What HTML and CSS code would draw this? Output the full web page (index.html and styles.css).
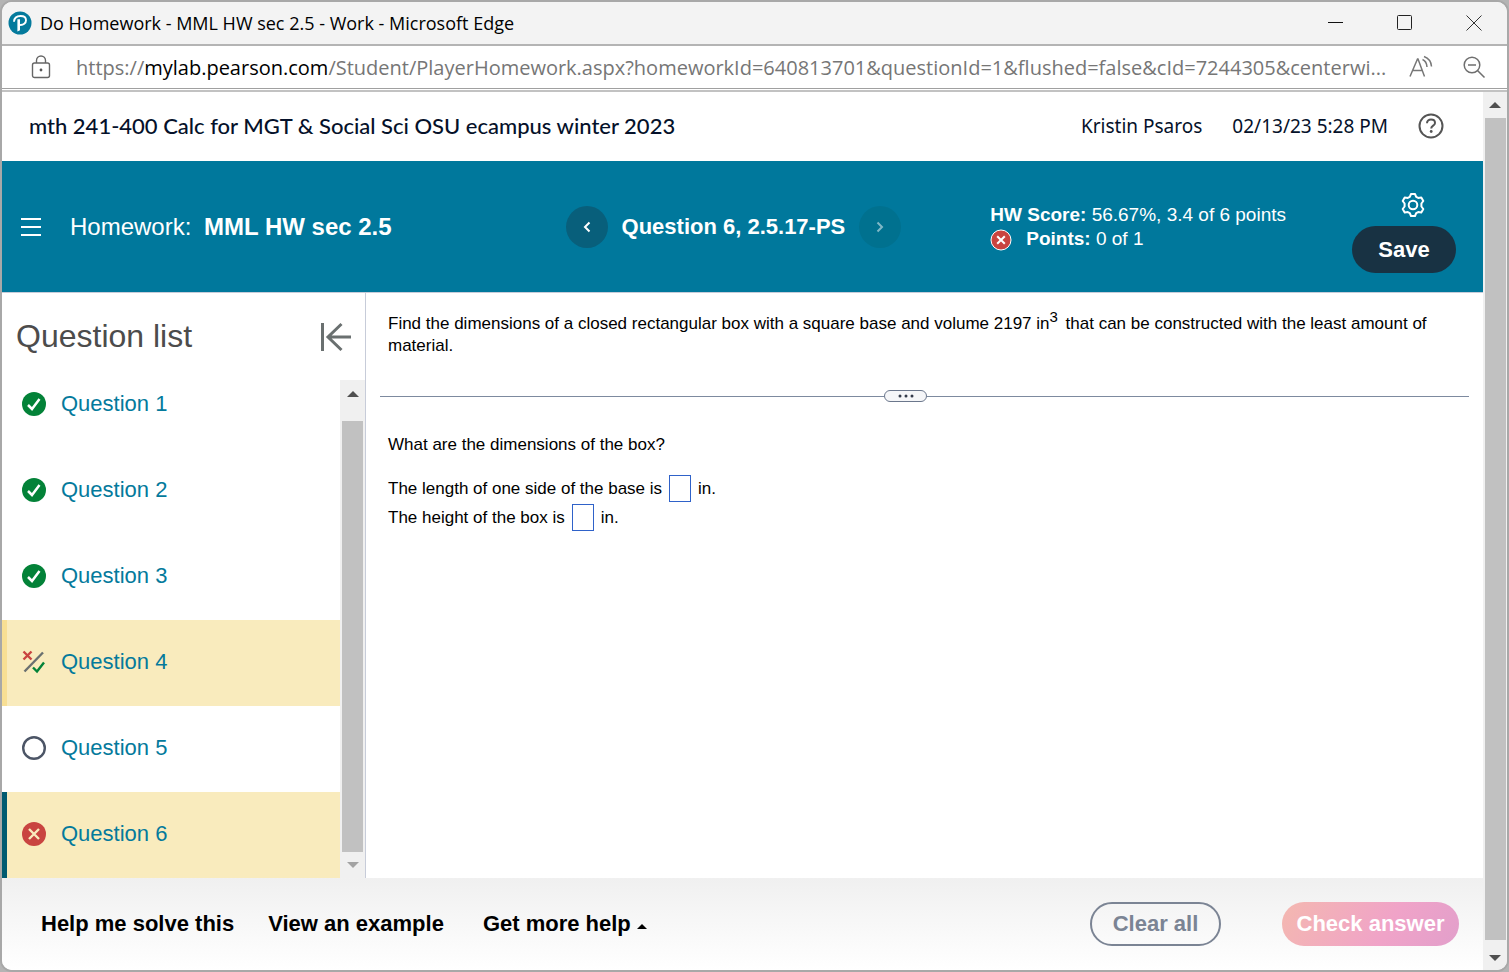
FILE: index.html
```html
<!DOCTYPE html>
<html lang="en">

<head>
    <meta charset="UTF-8">
    <meta name="viewport" content="width=device-width, initial-scale=1.0">
    <title>Do Homework - MML HW sec 2.5</title>
    <link rel="stylesheet" href="styles.css">
</head>

<body>
    <div class="window">
        <div class="titlebar">
            <svg class="logo" width="24" height="24" viewBox="0 0 24 24">
                <circle cx="12" cy="12" r="11.5" fill="#047a9c"/>
                <path d="M6 10.800C6.200 7 9 5 12.600 5c3.300 0 5.400 1.600 5.400 4.200 0 3-2.600 5-6 4.700" fill="none" stroke="#fff" stroke-width="1.900"/>
                <path d="M9.400 8.200h2.600v11l-2.600 1.200z" fill="#fff"/>
            </svg>
            <span class="title">Do Homework - MML HW sec 2.5 - Work - Microsoft Edge</span>
            <div class="window-buttons">
                <button type="button" aria-label="Minimize"><svg width="16" height="16" viewBox="0 0 16 16"><path d="M0 7.500h15" stroke="#111"/></svg></button>
                <button type="button" aria-label="Maximize"><svg width="16" height="16" viewBox="0 0 16 16"><rect x=".5" y=".5" width="14" height="14" rx="1" fill="none" stroke="#222"/></svg></button>
                <button type="button" aria-label="Close"><svg width="16" height="16" viewBox="0 0 16 16"><path d="M.5.5l15 15M15.500.5l-15 15" stroke="#333"/></svg></button>
            </div>
        </div>

        <div class="addressbar">
            <svg class="lock" width="20" height="24" viewBox="0 0 20 24" fill="none" stroke="#666" stroke-width="1.400">
                <rect x="1.500" y="8" width="17" height="14.500" rx="2"/>
                <path d="M5.500 8V5.500a4.500 4.500 0 0 1 9 0V8"/>
                <circle cx="10" cy="15" r="1.400" fill="#555" stroke="none"/>
            </svg>
            <div class="url">https://<b>mylab.pearson.com</b>/Student/PlayerHomework.aspx?homeworkId=640813701&amp;questionId=1&amp;flushed=false&amp;cId=7244305&amp;centerwi...</div>
            <button type="button" aria-label="Read aloud">
                <svg width="24" height="24" viewBox="0 0 24 24" fill="none" stroke="#777" stroke-width="1.500">
                    <path d="M1 21.500L8.500 4h.5l6.500 17.500M4 15.500h9.500M13.500 4.500q4 1.500 4.500 7.500M15 1.500q7 2.500 7.500 10"/>
                </svg>
            </button>
            <button type="button" aria-label="Zoom out">
                <svg width="24" height="24" viewBox="0 0 24 24" fill="none" stroke="#6f6f6f" stroke-width="1.500">
                    <circle cx="10" cy="10" r="7.800"/>
                    <path d="M6 10h8M15.500 15.500l7 7"/>
                </svg>
            </button>
        </div>

        <div class="viewport">
            <div class="page">
                <header class="course-header">
                    <h1>mth 241-400 Calc for MGT &amp; Social Sci OSU ecampus winter 2023</h1>
                    <span class="user">Kristin Psaros</span>
                    <span class="date">02/13/23 5:28 PM</span>
                    <button type="button" aria-label="Help">
                        <svg width="26" height="26" viewBox="0 0 26 26" fill="none" stroke="#555" stroke-width="2">
                            <circle cx="13" cy="13" r="11.500"/>
                            <path d="M9 10.200c0-2.300 1.700-3.600 4-3.600s4 1.300 4 3.300c0 2.800-3.800 2.600-3.800 5.600"/>
                            <circle cx="13.200" cy="18.500" r="1.400" fill="#555" stroke="none"/>
                        </svg>
                    </button>
                </header>

                <div class="homework-bar">
                    <button type="button" class="menu" aria-label="Menu">
                        <svg width="20" height="18" viewBox="0 0 20 18"><path d="M0 1h20M0 9h20M0 17h20" stroke="#fff" stroke-width="2"/></svg>
                    </button>
                    <h2>Homework: <b>MML HW sec 2.5</b></h2>
                    <div class="question-nav">
                        <button type="button" class="nav-button" aria-label="Previous question">
                            <svg width="8" height="12" viewBox="0 0 8 12"><path d="M6.500 1.500L2 6l4.500 4.500" fill="none" stroke="#fff" stroke-width="2"/></svg>
                        </button>
                        <strong>Question 6, 2.5.17-PS</strong>
                        <button type="button" class="nav-button" aria-label="Next question" disabled>
                            <svg width="8" height="12" viewBox="0 0 8 12"><path d="M1.500 1.500L6 6l-4.500 4.500" fill="none" stroke="#fff" stroke-width="2"/></svg>
                        </button>
                    </div>
                    <div class="score">
                        <div><b>HW Score:</b> 56.67%, 3.4 of 6 points</div>
                        <div class="points">
                            <svg width="22" height="22" viewBox="0 0 22 22">
                                <circle cx="11" cy="11" r="10" fill="#c94440" stroke="#fff"/>
                                <path d="M7.200 7.200l7.600 7.600M14.800 7.200l-7.600 7.600" stroke="#fff" stroke-width="2"/>
                            </svg>
                            <span><b>Points:</b> 0 of 1</span>
                        </div>
                    </div>
                    <div class="actions">
                        <button type="button" class="settings" aria-label="Settings">
                            <svg width="26" height="26" viewBox="0 0 26 26" fill="none" stroke="#fff" stroke-width="2" stroke-linejoin="round">
                                <path d="M11 2h4l1.200 2.800 2 1.100 3.100-.4 2 3.500-1.900 2.500v3l1.900 2.500-2 3.500-3.100-.4-2 1.100L15 24h-4l-1.200-2.800-2-1.100-3.100.4-2-3.500 1.900-2.500v-3L2.700 9l2-3.500 3.100.4 2-1.100z"/>
                                <circle cx="13" cy="13" r="4.300"/>
                            </svg>
                        </button>
                        <button type="button" class="save">Save</button>
                    </div>
                </div>

                <div class="content">
                    <aside class="sidebar">
                        <div class="sidebar-head">
                            <h2>Question list</h2>
                            <button type="button" aria-label="Collapse question list">
                                <svg width="32" height="30" viewBox="0 0 32 30" fill="none" stroke="#6a7070" stroke-width="3"><path d="M2.500 1v28M31 15H8M21.500 2L8 15l13.500 13"/></svg>
                            </button>
                        </div>
                        <div class="list-area">
                            <ul class="question-list">
                                <li>
                                    <svg width="24" height="24" viewBox="0 0 24 24"><circle cx="12" cy="12" r="12" fill="#038238"/><path d="M6 13l4 4 7.500-10" fill="none" stroke="#fff" stroke-width="2.500"/></svg>
                                    <a href="#">Question 1</a>
                                </li>
                                <li>
                                    <svg width="24" height="24" viewBox="0 0 24 24"><circle cx="12" cy="12" r="12" fill="#038238"/><path d="M6 13l4 4 7.500-10" fill="none" stroke="#fff" stroke-width="2.500"/></svg>
                                    <a href="#">Question 2</a>
                                </li>
                                <li>
                                    <svg width="24" height="24" viewBox="0 0 24 24"><circle cx="12" cy="12" r="12" fill="#038238"/><path d="M6 13l4 4 7.500-10" fill="none" stroke="#fff" stroke-width="2.500"/></svg>
                                    <a href="#">Question 3</a>
                                </li>
                                <li class="marked">
                                    <svg width="24" height="24" viewBox="0 0 24 24" fill="none" stroke-width="2.400">
                                        <path d="M1.500 1.500l8 8M9.500 1.500l-8 8" stroke="#c94440"/>
                                        <path d="M2.500 21.500L21 2.500" stroke="#6a7070"/>
                                        <path d="M11 17.500l4 4 7-9" stroke="#038238"/>
                                    </svg>
                                    <a href="#">Question 4</a>
                                </li>
                                <li>
                                    <svg width="24" height="24" viewBox="0 0 24 24"><circle cx="12" cy="12" r="10.800" fill="#fff" stroke="#4c5566" stroke-width="2.400"/></svg>
                                    <a href="#">Question 5</a>
                                </li>
                                <li class="marked current">
                                    <svg width="24" height="24" viewBox="0 0 24 24"><circle cx="12" cy="12" r="12" fill="#c94440"/><path d="M7 7l10 10M17 7L7 17" stroke="#f9ebbd" stroke-width="2.400"/></svg>
                                    <a href="#">Question 6</a>
                                </li>
                            </ul>
                            <div class="scrollbar list-scroll">
                                <span class="arrow up"></span>
                                <span class="thumb"></span>
                                <span class="arrow down light"></span>
                            </div>
                        </div>
                    </aside>

                    <main class="question">
                        <p class="prompt">Find the dimensions of a closed rectangular box with a square base and volume 2197 in<sup>3</sup> that can be constructed with the least amount of material.</p>
                        <div class="divider">
                            <button type="button" aria-label="Resize">
                                <svg width="18" height="4" viewBox="0 0 18 4" fill="#333b4a"><circle cx="3" cy="2" r="1.500"/><circle cx="9" cy="2" r="1.500"/><circle cx="15" cy="2" r="1.500"/></svg>
                            </button>
                        </div>
                        <p class="ask">What are the dimensions of the box?</p>
                        <div class="answer">
                            <label for="side">The length of one side of the base is</label>
                            <input type="text" id="side"> in.
                        </div>
                        <div class="answer">
                            <label for="height">The height of the box is</label>
                            <input type="text" id="height"> in.
                        </div>
                    </main>
                </div>

                <footer>
                    <button type="button" class="help">Help me solve this</button>
                    <button type="button" class="help">View an example</button>
                    <button type="button" class="help more">Get more help<span class="caret"></span></button>
                    <button type="button" class="clear">Clear all</button>
                    <button type="button" class="check">Check answer</button>
                </footer>
            </div>
            <div class="scrollbar page-scroll">
                <span class="arrow up"></span>
                <span class="thumb"></span>
                <span class="arrow down"></span>
            </div>
        </div>
    </div>
</body>

</html>
```

FILE: styles.css
```css
* {
    box-sizing: border-box;
}

body {
    margin: 0;
    background: #b4b4b4;
    font-family: Arial, "Liberation Sans", sans-serif;
    font-size: 18px;
    color: #000;
}

h1, h2, p, ul {
    margin: 0;
    padding: 0;
    font-weight: normal;
}

button {
    font-family: inherit;
    border: 0;
    padding: 0;
    background: none;
    color: inherit;
    cursor: pointer;
}

svg {
    display: block;
    flex: none;
}

.window {
    display: flex;
    flex-direction: column;
    min-height: 100vh;
    border: 2px solid #a8a8a8;
    border-radius: 12px;
    background: #fff;
    overflow: hidden;
}

/* browser frame */
.titlebar {
    display: flex;
    align-items: center;
    height: 44px;
    padding: 0 25px 0 6px;
    background: #f3f3f3;
    border-bottom: 2px solid #b4b4b4;
}

.title {
    flex: 1;
    margin-left: 8px;
    font-family: "Open Sans", "Noto Sans", sans-serif;
    font-size: 18px;
}

.window-buttons {
    display: flex;
    gap: 53px;
}

.addressbar {
    display: flex;
    align-items: center;
    height: 43px;
    padding: 0 21px 0 29px;
    border-bottom: 1px solid #a0a0a0;
    font-family: "Open Sans", "Noto Sans", sans-serif;
}

.url {
    flex: 1;
    margin-left: 25px;
    font-size: 20px;
    color: #767676;
    white-space: nowrap;
}

.url b {
    font-weight: normal;
    color: #000;
}

.addressbar button {
    margin-left: 29px;
}

.addressbar .url + button {
    margin-left: 16px;
}

.viewport {
    flex: 1;
    display: flex;
    margin-top: 1px;
    border-top: 2px solid #c2c2c2;
}

.page {
    flex: 1;
    display: flex;
    flex-direction: column;
    min-width: 0;
}

/* scrollbars */
.scrollbar {
    display: flex;
    flex-direction: column;
    align-items: center;
    background: #f0f0f0;
}

.page-scroll {
    width: 24px;
}

.list-scroll {
    width: 25px;
}

.thumb {
    flex: 1;
    width: 21px;
    background: #c1c1c1;
}

.arrow {
    display: flex;
    align-items: center;
    height: 26px;
}

.list-scroll .up {
    height: 41px;
    padding-bottom: 14px;
}

.arrow::before {
    content: "";
    border: 6px solid transparent;
    border-top-width: 0;
    border-bottom-color: #505050;
}

.down::before {
    border-top: 6px solid #505050;
    border-bottom: 0;
}

.page-scroll .down {
    height: 30px;
    padding-top: 6px;
}

.light::before {
    border-top-color: #a3a3a3;
}

/* course header */
.course-header {
    display: flex;
    align-items: center;
    height: 69px;
    padding: 0 39px 2px 27px;
    font-family: "Noto Sans", sans-serif;
    font-size: 19px;
    color: #05112a;
}

.course-header h1 {
    flex: 1;
    font-family: Lato, sans-serif;
    font-size: 22px;
    font-weight: 500;
}

.date {
    margin: 0 30px;
}

.homework-bar {
    display: flex;
    align-items: center;
    height: 132px;
    padding: 0 27px 0 19px;
    background: #00789c;
    border-bottom: 1px solid #c7ccd9;
    color: #fff;
}

.homework-bar h2 {
    flex: 1;
    margin-left: 29px;
    font-size: 24px;
}

.homework-bar h2 b {
    margin-left: 6px;
}

.question-nav {
    display: flex;
    align-items: center;
    gap: 14px;
    font-size: 22px;
}

.nav-button {
    display: flex;
    align-items: center;
    justify-content: center;
    width: 42px;
    height: 42px;
    border-radius: 50%;
    background: #085f7b;
}

.nav-button:disabled {
    background: #00718f;
}

.nav-button:disabled svg {
    opacity: 0.5;
}

.score {
    margin: 0 66px 0 89px;
    font-size: 19px;
    line-height: 24px;
}

.points {
    display: flex;
    gap: 14px;
}

.points svg {
    margin-top: 2px;
}

.actions {
    display: flex;
    flex-direction: column;
    align-items: center;
    gap: 8px;
    margin-top: 12px;
}

.settings {
    margin-left: 17px;
}

.save {
    width: 104px;
    height: 47px;
    border-radius: 24px;
    background: #183243;
    font-size: 22px;
    font-weight: bold;
}

/* question list */
.content {
    flex: 1;
    display: flex;
}

.sidebar {
    display: flex;
    flex-direction: column;
    width: 364px;
    border-right: 1px solid #c7ccd9;
}

.sidebar-head {
    display: flex;
    align-items: center;
    justify-content: space-between;
    height: 87px;
    padding: 0 13px 0 14px;
    color: #4c4c4c;
}

.sidebar-head h2 {
    font-size: 32px;
}

.list-area {
    flex: 1;
    display: flex;
}

.question-list {
    flex: 1;
    overflow: hidden;
    list-style: none;
}

.question-list li {
    display: flex;
    align-items: center;
    gap: 15px;
    height: 86px;
    padding: 0 15px 2px;
    border-left: 5px solid transparent;
}

/* list is scrolled to its end */
.question-list li:first-child {
    margin-top: -18px;
}

.question-list a {
    font-size: 22px;
    color: #047a9c;
    text-decoration: none;
}

.question-list .marked {
    background: #f9ebbd;
    border-left-color: #f8df94;
}

.question-list .current {
    border-left-color: #005a70;
}

/* question */
.question {
    flex: 1;
    padding: 20px 14px 20px;
    font-size: 17px;
    line-height: 22px;
}

.prompt, .ask, .answer {
    padding-left: 8px;
}

.prompt sup {
    margin-right: 3px;
    font-size: 15px;
    line-height: 0;
}

.divider {
    display: flex;
    align-items: center;
    margin: 33px 0 32px;
}

.divider::before, .divider::after {
    content: "";
    flex: 1;
    height: 1px;
    background: #7d8a9f;
}

.divider::before {
    flex: 0 0 504px;
}

.divider button {
    display: flex;
    align-items: center;
    justify-content: center;
    width: 43px;
    height: 12px;
    border: 1px solid #6b778c;
    border-radius: 6px;
    background: #f5f6f8;
}

.ask {
    margin-bottom: 18px;
}

.answer {
    display: flex;
    align-items: center;
    gap: 7px;
    height: 29px;
}

.answer input {
    width: 22px;
    height: 27px;
    padding: 0 2px;
    border: 1px solid #2f62c9;
    font: inherit;
}

/* bottom bar */
footer {
    display: flex;
    align-items: center;
    height: 92px;
    padding: 0 24px 0 39px;
    background: linear-gradient(#f0f0f0, #fff);
}

footer button {
    font-size: 22px;
    font-weight: bold;
}

.help {
    margin-right: 34px;
}

.more {
    display: flex;
    align-items: center;
    gap: 6px;
    margin: 0 auto 0 5px;
}

.caret {
    border: 5px solid transparent;
    border-top-width: 0;
    border-bottom-color: #000;
    margin-top: 4px;
}

.clear {
    width: 131px;
    height: 44px;
    margin-right: 61px;
    border: 2px solid #7b8494;
    border-radius: 22px;
    color: #7b8494;
}

.check {
    width: 177px;
    height: 44px;
    border-radius: 22px;
    background: linear-gradient(120deg, #f4b8b0, #f0a3c8 60%, #e29fcb);
    color: #fff;
}
```
